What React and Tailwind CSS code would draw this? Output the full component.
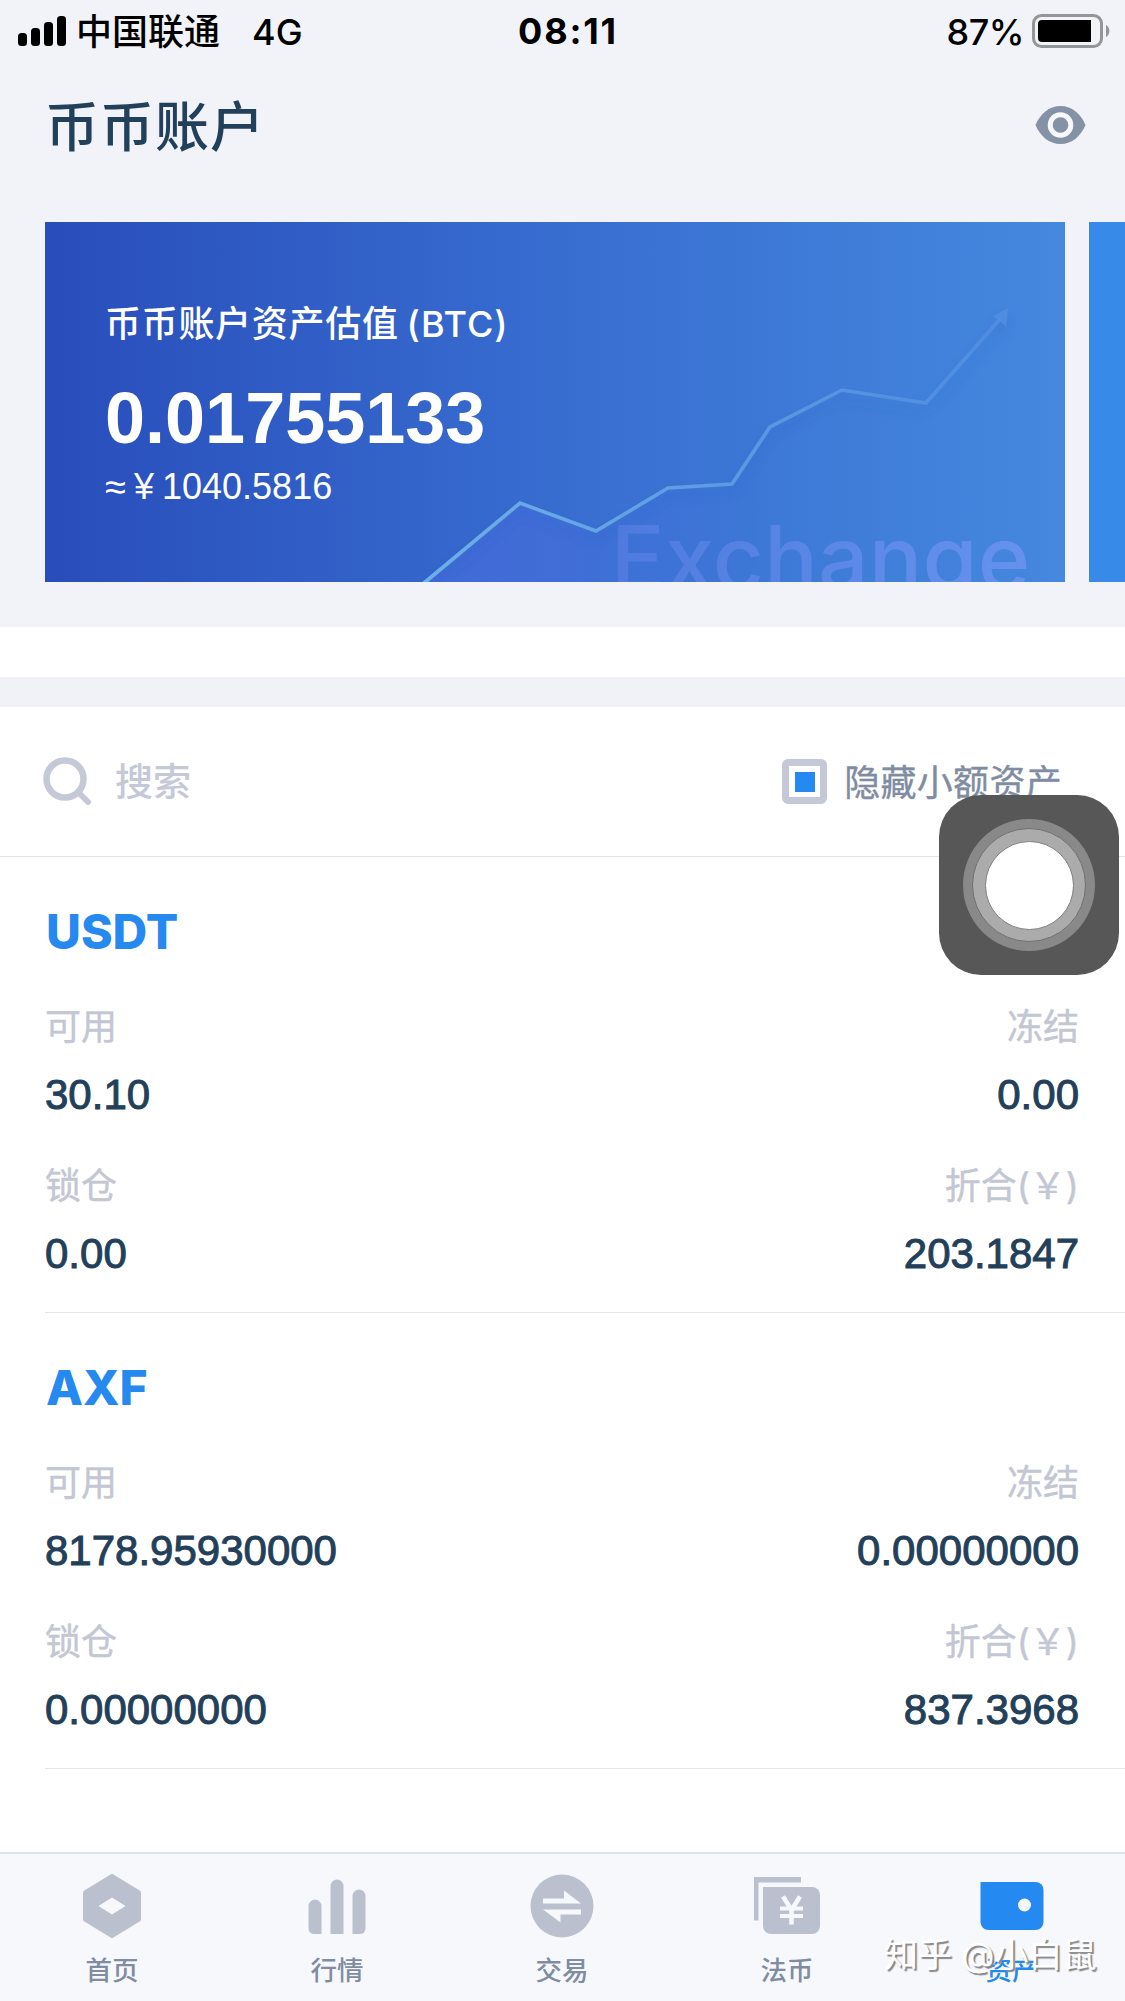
import { Fragment } from 'react';

const coins = [
  {
    name: 'USDT',
    available: '30.10',
    frozen: '0.00',
    locked: '0.00',
    value: '203.1847',
  },
  {
    name: 'AXF',
    available: '8178.95930000',
    frozen: '0.00000000',
    locked: '0.00000000',
    value: '837.3968',
  },
];

const HomeIcon = () => (
  <svg width="64" height="64" viewBox="0 0 64 64" fill="#bac0cd">
    <path
      d="M32 2 L59 18.500 V45.500 L32 62 L5 45.500 V18.500 Z"
      stroke="#bac0cd"
      strokeWidth="4"
      strokeLinejoin="round"
    />
    <path d="M32 23.500 L45.500 32 L32 40.500 L18.500 32 Z" fill="#f6f8fc" />
  </svg>
);

const MarketIcon = () => (
  <svg width="64" height="64" viewBox="0 0 64 64" fill="#bac0cd">
    <path d="M3.500 32 a6.500 6.500 0 0 1 13 0 V60 H9 a5.500 5.500 0 0 1 -5.500 -5.500 Z" />
    <path d="M25.500 12 a6.500 6.500 0 0 1 13 0 V60 H25.500 Z" />
    <path d="M47.500 22 a6.500 6.500 0 0 1 13 0 V54.500 a5.500 5.500 0 0 1 -5.500 5.500 H47.500 Z" />
  </svg>
);

const TradeIcon = () => (
  <svg width="64" height="64" viewBox="0 0 64 64" fill="#f6f8fc">
    <circle cx="32" cy="32" r="31.500" fill="#bac0cd" />
    <path d="M13 24.500 H34 V16.500 L51 29.500 H13 Z" />
    <path d="M51 35.500 V40.500 H30.500 V48.500 L13 35.500 Z" />
  </svg>
);

const FiatIcon = () => (
  <svg width="68" height="64" viewBox="0 0 68 64" fill="#bac0cd">
    <path d="M1 3 H48 V8.500 H5.500 V46.500 H1 Z" />
    <path d="M10 13 H59 a8 8 0 0 1 8 8 V52 a8 8 0 0 1 -8 8 H18 a8 8 0 0 1 -8 -8 Z" />
    <g stroke="#f6f8fc" strokeWidth="4.500" fill="none">
      <path d="M30 22.500 L38.500 36 L47 22.500" />
      <path d="M38.500 35 V50.500" />
      <path d="M27 34.500 H50" strokeWidth="4" />
      <path d="M27 42 H50" strokeWidth="4" />
    </g>
  </svg>
);

const WalletIcon = () => (
  <svg width="64" height="64" viewBox="0 0 64 64">
    <path
      d="M0.500 8 H55.500 a8 8 0 0 1 8 8 V48 a8 8 0 0 1 -8 8 H8.500 a8 8 0 0 1 -8 -8 Z"
      fill="#2589f2"
    />
    <circle cx="44.500" cy="31" r="6.500" fill="#f6f8fc" />
  </svg>
);

const tabs = [
  { text: '首页', icon: <HomeIcon /> },
  { text: '行情', icon: <MarketIcon /> },
  { text: '交易', icon: <TradeIcon /> },
  { text: '法币', icon: <FiatIcon /> },
  { text: '资产', icon: <WalletIcon />, active: true },
];

const StatusBar = () => (
  <div className="h-[62px] flex items-center justify-between pl-[18px] pr-[14px] text-[36px] leading-[62px] font-medium text-black">
    <div className="flex items-center w-[400px]">
      <svg width="48" height="30" viewBox="0 0 48 30" className="mr-[10px]">
        <rect x="0" y="17" width="9" height="13" rx="3.500" />
        <rect x="13" y="12" width="9" height="18" rx="3.500" />
        <rect x="26" y="6" width="9" height="24" rx="3.500" />
        <rect x="39" y="0" width="9" height="30" rx="3.500" />
      </svg>
      <span className="mt-[2px] mr-[32px]">中国联通</span>
      <span className="mt-px">4G</span>
    </div>
    <span className="pl-[7px] font-bold tracking-[1.8px]">08:11</span>
    <div className="flex items-center justify-end w-[400px]">
      <span className="mt-px mr-[8px] tracking-[-0.5px]">87%</span>
      <svg width="79" height="34" viewBox="0 0 79 34">
        <rect
          x="1.500"
          y="1.500"
          width="68"
          height="31"
          rx="8"
          fill="none"
          stroke="#949599"
          strokeWidth="3"
        />
        <path d="M10 6 H59 V28 H10 a4 4 0 0 1 -4 -4 V10 a4 4 0 0 1 4 -4 Z" />
        <path d="M74 11 a7 7 0 0 1 0 12 Z" fill="#949599" />
      </svg>
    </div>
  </div>
);

const BalanceCard = () => (
  <div className="relative overflow-hidden shrink-0 w-[1020px] h-[360px] bg-gradient-to-r from-[#294dbb] via-[#386dd0] to-[#4588df] text-white">
    <svg
      width="1020"
      height="360"
      viewBox="0 0 1020 360"
      className="absolute inset-0"
    >
      <defs>
        <linearGradient id="line" x1="380" x2="965" gradientUnits="userSpaceOnUse">
          <stop offset="0" stopColor="#6db0e6" />
          <stop offset="0.350" stopColor="#62a2e4" />
          <stop offset="1" stopColor="#5590e3" stopOpacity="0.700" />
        </linearGradient>
        <linearGradient id="area" x1="380" x2="720" gradientUnits="userSpaceOnUse">
          <stop offset="0" stopColor="#4c6ee0" stopOpacity="0.550" />
          <stop offset="0.350" stopColor="#4c6ee0" stopOpacity="0.450" />
          <stop offset="0.700" stopColor="#4472dc" stopOpacity="0.300" />
          <stop offset="1" stopColor="#4472dc" stopOpacity="0" />
        </linearGradient>
        <linearGradient id="word" x1="570" x2="985" gradientUnits="userSpaceOnUse">
          <stop offset="0" stopColor="#4f7bdf" />
          <stop offset="1" stopColor="#6692ee" />
        </linearGradient>
        <filter id="shade" x="-10%" y="-10%" width="120%" height="130%">
          <feDropShadow dx="0" dy="8" stdDeviation="6" floodColor="#2450b0" floodOpacity="0.220" />
        </filter>
      </defs>
      <path
        d="M380 360 L475 281 L551 309 L623 266 L687 262 L725 205 L797 168 L881 181 L881 360 Z"
        fill="url(#area)"
      />
      <text
        x="566"
        y="368"
        fill="url(#word)"
        fontFamily="Inter, sans-serif"
        fontSize="89"
        fontWeight="500"
        textLength="419"
      >
        Exchange
      </text>
      <g filter="url(#shade)">
        <path
          d="M379 361 L475 281 L551 309 L623 266 L687 262 L725 205 L797 168 L881 181 L955 97"
          fill="none"
          stroke="url(#line)"
          strokeWidth="3.600"
        />
        <path d="M963 86 L948 94 L961 104 Z" fill="#5590e3" fillOpacity="0.700" />
      </g>
    </svg>
    <div className="relative pl-[60px] pt-[76px]">
      <div className="text-[36px] leading-[52px] font-medium tracking-[0.7px]">
        币币账户资产估值<span className="ml-[8px] tracking-[1px]">(BTC)</span>
      </div>
      <div className="mt-[26px] text-[72px] leading-[84px] font-bold font-['Liberation_Sans',sans-serif]">
        0.01755133
      </div>
      <div className="mt-[5px] flex items-center text-[36px] leading-[44px] font-['Liberation_Sans',sans-serif]">
        <span className="w-[29px] text-[38px]">≈</span>
        <span className="w-[28px]">¥</span>
        <span>1040.5816</span>
      </div>
    </div>
  </div>
);

const Coin = ({ coin }) => {
  const rows = [
    ['可用', '冻结', coin.available, coin.frozen],
    ['锁仓', '折合(￥)', coin.locked, coin.value],
  ];

  return (
    <div className="ml-[45px] pr-[46px] h-[456px] pt-[45px] border-b border-[#e4e5ea]">
      <div className="h-[58px] pl-px text-[48px] leading-[60px] font-extrabold text-[#2589f0]">
        {coin.name}
      </div>
      {rows.map(([left, right, leftValue, rightValue]) => (
        <Fragment key={left}>
          <div className="mt-[41px] flex justify-between text-[36px] leading-[52px] text-[#c3c6d3] [-webkit-text-stroke:0.4px_#c3c6d3]">
            <span>{left}</span>
            <span>{right}</span>
          </div>
          <div className="mt-[18px] flex justify-between text-[42px] leading-[48px] text-[#23405a] font-['Liberation_Sans',sans-serif] [-webkit-text-stroke:1px_#23405a]">
            <span>{leftValue}</span>
            <span>{rightValue}</span>
          </div>
        </Fragment>
      ))}
    </div>
  );
};

const App = () => {
  return (
    <div className="relative flex flex-col w-[1125px] h-[2001px] overflow-hidden bg-white font-['Inter','Noto_Sans_CJK_SC',sans-serif]">
      <div className="h-[627px] bg-[#f1f3f8]">
        <StatusBar />
        <div className="h-[160px] pl-[45px] pr-[39px] pt-[22px] flex items-start justify-between">
          <h1 className="mt-[4px] text-[54px] leading-[80px] font-medium tracking-[1px] text-[#23405a]">
            币币账户
          </h1>
          <svg width="51" height="38" viewBox="0 0 51 38" className="mt-[22px]">
            <path
              d="M0.500 19 C5 8 14 0 25.500 0 S46 8 50.500 19 C46 30 37 38 25.500 38 S5 30 0.500 19 Z"
              fill="#8592a6"
            />
            <circle cx="25.500" cy="19" r="10.300" fill="#8592a6" stroke="#f6f8fc" strokeWidth="5" />
          </svg>
        </div>
        <div className="flex gap-6 pl-[45px] overflow-hidden">
          <BalanceCard />
          <div className="shrink-0 w-[1020px] h-[360px] bg-[#378ae8]" />
        </div>
      </div>

      <div className="mt-[50px] h-[30px] bg-[#f1f2f7]" />

      {/* Search and filter */}
      <div className="h-[150px] shrink-0 flex items-center pl-[43px] pr-[63px] border-b border-[#e1e3e8]">
        <svg width="49" height="49" viewBox="0 0 49 49" fill="none" stroke="#c5c8d6">
          <circle cx="22" cy="22" r="18.500" strokeWidth="6.500" />
          <path d="M36 36 L45 45" strokeWidth="6" strokeLinecap="round" />
        </svg>
        <span className="ml-[23px] text-[38px] font-medium text-[#c5c8d6]">搜索</span>
        <div className="ml-auto flex items-center">
          <div className="size-[45px] border-[7px] border-[#c5c8d6] rounded-[6px] flex items-center justify-center">
            <div className="size-5 bg-[#2589f2]" />
          </div>
          <span className="ml-[17px] mt-[2px] text-[36px] tracking-[0.3px] text-[#7f8ca2] [-webkit-text-stroke:0.4px_#7f8ca2]">
            隐藏小额资产
          </span>
        </div>
      </div>

      {coins.map((coin) => (
        <Coin key={coin.name} coin={coin} />
      ))}

      {/* Tab bar */}
      <div className="mt-auto h-[149px] shrink-0 grid grid-cols-5 bg-[#f6f8fc] border-t-2 border-[#dde4ea]">
        {tabs.map((tab) => (
          <div key={tab.text} className="flex flex-col items-center pt-[20px] pr-px">
            {tab.icon}
            <span
              className={
                tab.active
                  ? 'mt-[12px] text-[26.500px] leading-[40px] font-medium text-[#2589f2]'
                  : 'mt-[12px] text-[26.500px] leading-[40px] font-medium text-[#7f8ca2]'
              }
            >
              {tab.text}
            </span>
          </div>
        ))}
      </div>

      {/* Floating assistive button */}
      <div className="absolute left-[939px] top-[795px] size-[180px] rounded-[42px] bg-[#575757] flex items-center justify-center">
        <div className="size-[132px] rounded-full bg-[#898989] flex items-center justify-center">
          <div className="size-[114px] rounded-full bg-[#ababab] border border-[#707070] flex items-center justify-center">
            <div className="size-[89px] rounded-full bg-white border border-[#808080]" />
          </div>
        </div>
      </div>

      <div className="absolute left-[884px] top-[1930px] text-[34px] leading-[50px] whitespace-nowrap text-white [text-shadow:2px_2px_1px_#888]">
        知乎 @小白鼠
      </div>
    </div>
  );
};

export default App;
